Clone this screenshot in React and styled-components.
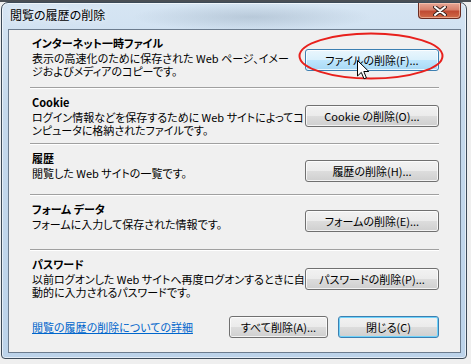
import styled, { createGlobalStyle } from 'styled-components';

const GlobalStyle = createGlobalStyle`
  html, body {
    margin: 0;
    padding: 0;
  }
  body {
    width: 471px;
    height: 364px;
    overflow: hidden;
    background: linear-gradient(#4a4f55 0 2px, #efefef 2px);
    font-family: "Noto Sans CJK JP", "Noto Sans", sans-serif;
    font-feature-settings: "palt";
    color: #000;
  }
`;

const sections = [
  {
    title: 'インターネット一時ファイル',
    lines: ['表示の高速化のために保存された Web ページ、イメー', 'ジおよびメディアのコピーです。'],
    button: 'ファイルの削除(F)...',
    height: 57,
    btnTop: 19,
    hot: true,
  },
  {
    title: 'Cookie',
    lines: ['ログイン情報などを保存するために Web サイトによってコ', 'ンピュータに格納されたファイルです。'],
    button: 'Cookie の削除(O)...',
    height: 54,
    btnTop: 16,
  },
  {
    title: '履歴',
    lines: ['閲覧した Web サイトの一覧です。'],
    button: '履歴の削除(H)...',
    height: 49,
    btnTop: 15,
  },
  {
    title: 'フォーム データ',
    lines: ['フォームに入力して保存された情報です。'],
    button: 'フォームの削除(E)...',
    height: 53,
    btnTop: 14,
  },
  {
    title: 'パスワード',
    lines: ['以前ログオンした Web サイトへ再度ログオンするときに自', '動的に入力されるパスワードです。'],
    button: 'パスワードの削除(P)...',
    btnTop: 17,
  },
];

export default function App() {
  return (
    <>
      <GlobalStyle />
      <Page>
        <Window>
          <TitleBar>
            <Caption>閲覧の履歴の削除</Caption>
            <CloseButton>
              <svg width="14" height="10" viewBox="0 0 14 10">
                <path
                  d="M2 1 L12 9 M12 1 L2 9"
                  stroke="#3a2520"
                  strokeWidth="4"
                  strokeLinecap="round"
                />
                <path
                  d="M2 1 L12 9 M12 1 L2 9"
                  stroke="#ffffff"
                  strokeWidth="2"
                  strokeLinecap="round"
                />
              </svg>
            </CloseButton>
          </TitleBar>
          <Frame>
            <Client>
              <List>
                {sections.map((s, i) => (
                  <div key={s.title}>
                    <Section $height={s.height}>
                      <TextBlock>
                        <SectionTitle>{s.title}</SectionTitle>
                        <Desc>
                          {s.lines[0]}
                          {s.lines[1] && (
                            <>
                              <br />
                              {s.lines[1]}
                            </>
                          )}
                        </Desc>
                      </TextBlock>
                      <ButtonSlot $top={s.btnTop}>
                        <Button $variant={s.hot ? 'hot' : 'normal'} $width={134}>
                          {s.button}
                        </Button>
                        {s.hot && (
                          <>
                            <Ellipse viewBox="0 0 146 48">
                              <ellipse
                                cx="73"
                                cy="24"
                                rx="71.5"
                                ry="22.5"
                                fill="none"
                                stroke="#e8201c"
                                strokeWidth="2"
                              />
                            </Ellipse>
                            <Cursor viewBox="0 0 13 20" width="13" height="20">
                              <path
                                d="M0.5 0.5 L0.5 16 L4.3 12.4 L7 18.8 L9.4 17.8 L6.8 11.5 L11.8 11.5 Z"
                                fill="#fff"
                                stroke="#000"
                                strokeWidth="1"
                                strokeLinejoin="round"
                              />
                            </Cursor>
                          </>
                        )}
                      </ButtonSlot>
                    </Section>
                    {i < sections.length - 1 && <Separator />}
                  </div>
                ))}
              </List>
              <Footer>
                <HelpLink href="#">閲覧の履歴の削除についての詳細</HelpLink>
                <Buttons>
                  <Button $width={99}>すべて削除(A)...</Button>
                  <Button $variant="default" $width={101}>閉じる(C)</Button>
                </Buttons>
              </Footer>
            </Client>
          </Frame>
        </Window>
      </Page>
    </>
  );
}

const Page = styled.div`
  padding: 2px 0 0 1px;
`;

const Window = styled.div`
  width: 464px;
  height: 355px;
  border: 1px solid #3c4a58;
  border-radius: 7px 7px 4px 4px;
  background:
    radial-gradient(ellipse 120px 14px at 250px 14px, rgba(120, 140, 160, 0.3), transparent),
    linear-gradient(180deg, #d6e5f3 0%, #c5d9ec 30%, #bcd3ea 100%);
  box-shadow: inset 0 0 0 1px rgba(255, 255, 255, 0.6);
  display: flex;
  flex-direction: column;
`;

const TitleBar = styled.div`
  height: 26px;
  display: flex;
  align-items: flex-start;
`;

const Caption = styled.div`
  padding: 5px 0 0 8px;
  font-size: 12px;
  line-height: 14px;
  text-shadow: 0 0 6px rgba(255, 255, 255, 0.9);
`;

const CloseButton = styled.div`
  margin-left: auto;
  margin-right: 5px;
  width: 41px;
  height: 15px;
  border: 1px solid #6a2c22;
  border-top: none;
  border-radius: 0 0 4px 4px;
  background: linear-gradient(180deg, #e9a796 0%, #d7806b 45%, #c04a32 55%, #cf6a48 100%);
  box-shadow: inset 0 0 0 1px rgba(255, 220, 200, 0.5);
  display: flex;
  align-items: center;
  justify-content: center;
`;

const Frame = styled.div`
  flex: 1;
  display: flex;
  padding: 0 5px 5px 6px;
`;

const Client = styled.div`
  flex: 1;
  display: flex;
  flex-direction: column;
  border: 1px solid #6c7c8e;
  background: #f0f0f0;
`;

const List = styled.div`
  padding: 0 21px 0 21px;
`;

const Section = styled.div`
  display: flex;
  justify-content: space-between;
  align-items: flex-start;
  height: ${(p) => (p.$height ? `${p.$height}px` : 'auto')};
  padding-top: 7px;
  box-sizing: border-box;
`;

const TextBlock = styled.div`
  padding-left: 2px;
  white-space: nowrap;
`;

const SectionTitle = styled.div`
  font-size: 11px;
  font-weight: 700;
  line-height: 13px;
`;

const Desc = styled.div`
  margin-top: 2px;
  font-size: 11px;
  line-height: 13px;
`;

const ButtonSlot = styled.div`
  position: relative;
  margin-top: ${(p) => p.$top - 7}px;
`;

const Button = styled.div`
  width: ${(p) => p.$width}px;
  height: 22px;
  box-sizing: border-box;
  border: 1px solid ${(p) => (p.$variant === 'normal' || !p.$variant ? '#707070' : '#3c7fb1')};
  border-radius: 3px;
  background: ${(p) =>
    p.$variant === 'hot'
      ? 'linear-gradient(180deg, #eaf6fd 0%, #d9f0fc 50%, #bee6fd 50%, #a7d9f5 100%)'
      : 'linear-gradient(180deg, #f2f2f2 0%, #ebebeb 50%, #dddddd 50%, #cfcfcf 100%)'};
  box-shadow: ${(p) =>
    p.$variant === 'default'
      ? 'inset 0 0 0 1px #6fd3fb'
      : 'inset 0 0 0 1px rgba(255, 255, 255, 0.75)'};
  display: flex;
  align-items: center;
  justify-content: center;
  font-size: 11px;
  line-height: 14px;
  white-space: nowrap;
`;

const Ellipse = styled.svg`
  position: absolute;
  left: -7px;
  top: -17px;
  width: 146px;
  height: 48px;
  pointer-events: none;
`;

const Cursor = styled.svg`
  position: absolute;
  left: 52px;
  top: 11px;
`;

const Separator = styled.div`
  height: 2px;
  background: linear-gradient(#a0a0a0 0 1px, #ffffff 1px);
`;

const Footer = styled.div`
  margin-top: auto;
  display: flex;
  align-items: center;
  justify-content: space-between;
  padding: 0 21px 14px 23px;
`;

const HelpLink = styled.a`
  font-size: 11px;
  line-height: 14px;
  color: #0066cc;
  text-decoration: underline;
`;

const Buttons = styled.div`
  display: flex;
  gap: 10px;
`;
